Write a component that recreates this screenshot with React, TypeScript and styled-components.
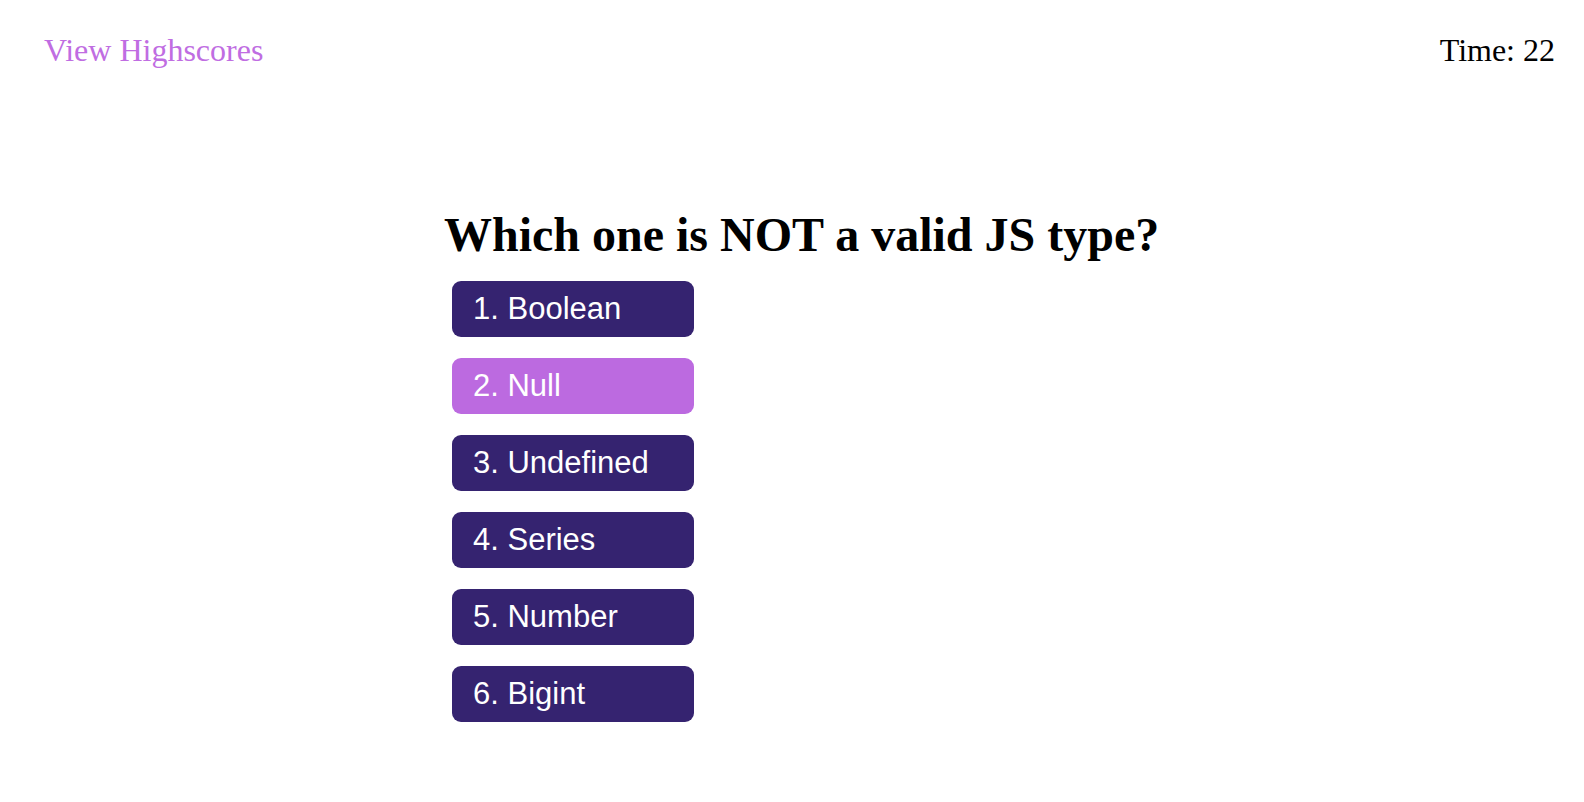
import React from "react";
import styled, { createGlobalStyle } from "styled-components";

const GlobalStyle = createGlobalStyle`
  html, body {
    margin: 0;
    padding: 0;
    background: #ffffff;
    font-family: "Liberation Serif", "Times New Roman", serif;
    color: #000000;
  }
`;

const Page = styled.div`
  width: 100%;
  min-height: 802px;
  display: flex;
  flex-direction: column;
`;

const Header = styled.header`
  display: flex;
  justify-content: space-between;
  align-items: baseline;
  padding: 32px 29px 0 44px;
`;

const HighscoresLink = styled.a`
  font-family: "Liberation Serif", "Times New Roman", serif;
  font-size: 32px;
  color: #c06de2;
  text-decoration: none;
  cursor: pointer;
`;

const Timer = styled.div`
  font-family: "Liberation Serif", "Times New Roman", serif;
  font-size: 32px;
  color: #000000;
`;

const Main = styled.main`
  width: 696px;
  margin: 0 auto;
  padding-top: 138px;
  display: flex;
  flex-direction: column;
`;

const Question = styled.h1`
  margin: 0 0 19px 0;
  font-family: "Liberation Serif", "Times New Roman", serif;
  font-weight: 700;
  font-size: 48px;
  white-space: nowrap;
`;

const Choices = styled.div`
  display: flex;
  flex-direction: column;
  gap: 21px;
  margin-left: 8px;
`;

const Choice = styled.button<{ $active?: boolean }>`
  width: 242px;
  height: 56px;
  box-sizing: border-box;
  display: flex;
  align-items: center;
  padding: 0 0 0 21px;
  border: none;
  border-radius: 9px;
  background: ${(p) => (p.$active ? "#bc6ae0" : "#352370")};
  color: #ffffff;
  font-family: "Liberation Sans", Arial, Helvetica, sans-serif;
  font-size: 31px;
  text-align: left;
  cursor: pointer;
`;

const choices = ["Boolean", "Null", "Undefined", "Series", "Number", "Bigint"];

export default function App() {
  return (
    <Page>
      <GlobalStyle />
      <Header>
        <HighscoresLink>View Highscores</HighscoresLink>
        <Timer>Time: 22</Timer>
      </Header>
      <Main>
        <Question>Which one is NOT a valid JS type?</Question>
        <Choices>
          {choices.map((c, i) => (
            <Choice key={c} $active={i === 1}>
              {i + 1}. {c}
            </Choice>
          ))}
        </Choices>
      </Main>
    </Page>
  );
}
